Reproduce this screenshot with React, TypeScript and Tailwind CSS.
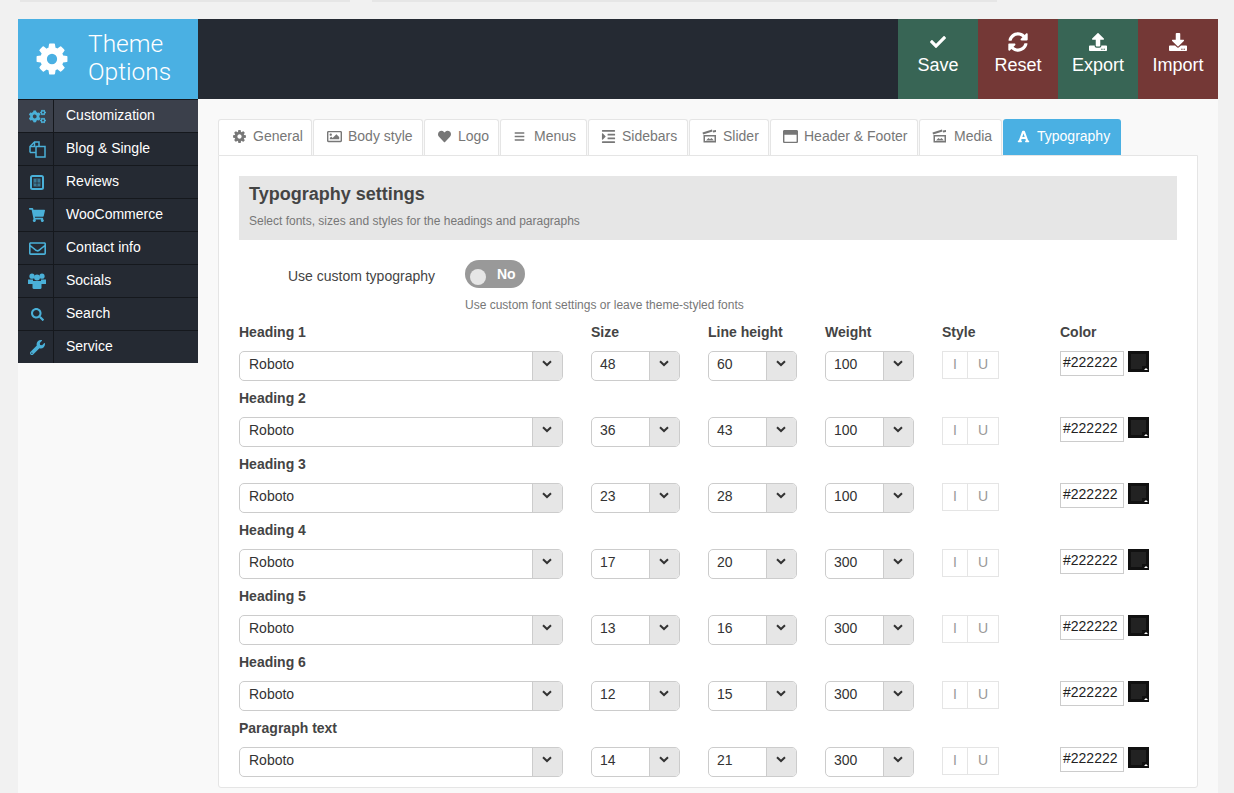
import React from "react";
import {
  FaBars,
  FaCheck,
  FaCogs,
  FaDownload,
  FaFont,
  FaHeart,
  FaIndent,
  FaRegEnvelope,
  FaRegImage,
  FaRegWindowMaximize,
  FaSearch,
  FaShoppingCart,
  FaSyncAlt,
  FaUpload,
  FaWrench,
} from "react-icons/fa";

function CogIcon({ size }: { size: number }) {
  return (
    <svg width={size} height={size} viewBox="0 0 1792 1792" fill="currentColor">
      <path d="M1152 896q0-106-75-181t-181-75-181 75-75 181 75 181 181 75 181-75 75-181zm512-109v222q0 12-8 23t-20 13l-185 28q-19 54-39 91 35 50 107 138 10 12 10 25t-9 23q-27 37-99 108t-94 71q-12 0-26-9l-138-108q-44 23-91 38-16 136-29 186-7 28-36 28h-222q-14 0-24.5-8.5t-11.5-21.5l-28-184q-49-16-90-37l-141 107q-10 9-25 9-14 0-25-11-126-114-165-168-7-10-7-23 0-12 8-23 15-21 51-66.5t54-70.5q-27-50-41-99l-183-27q-13-2-21-12.5t-8-23.5v-222q0-12 8-23t19-13l186-28q14-46 39-92-40-57-107-138-10-12-10-24 0-10 9-23 26-36 98.5-107.5t94.5-71.5q13 0 26 10l138 107q44-23 91-38 16-136 29-186 7-28 36-28h222q14 0 24.5 8.5t11.5 21.5l28 184q49 16 90 37l142-107q9-9 24-9 13 0 25 10 129 119 165 170 7 8 7 22 0 12-8 23-15 21-51 66.5t-54 70.5q26 50 41 98l183 28q13 2 21 12.5t8 23.5z" />
    </svg>
  );
}

function BlogIcon() {
  return (
    <svg width="17" height="17" viewBox="0 0 17 17" fill="none" stroke="currentColor" strokeWidth="1.5">
      <path d="M1 11.5 V5.5 L5.5 1 H10 V5.5" />
      <path d="M1 11.5 H7" />
      <path d="M5.5 1 V5.5 H1" />
      <path d="M7 5.5 H16 V16 H7 Z" />
    </svg>
  );
}

function ReviewsIcon() {
  return (
    <svg width="14" height="15" viewBox="0 0 14 15">
      <rect x="1" y="1" width="12" height="13" rx="1.5" fill="none" stroke="currentColor" strokeWidth="2" />
      <rect x="3.5" y="3.5" width="7" height="8" fill="currentColor" opacity="0.6" />
      <path d="M7 4 V11 M4 8 H10" stroke="#252a33" strokeWidth="0.7" />
    </svg>
  );
}

function SocialsIcon() {
  return (
    <svg width="18" height="16" viewBox="0 0 18 16" fill="currentColor">
      <circle cx="4" cy="3.2" r="2.6" />
      <circle cx="14" cy="3.2" r="2.6" />
      <circle cx="9" cy="4.5" r="3" />
      <path d="M0 6.5 H5 V11 H0 Z M13 6.5 H18 V11 H13 Z" />
      <path d="M4.5 8 H13.5 V14.5 Q13.5 16 12 16 H6 Q4.5 16 4.5 14.5 Z" />
    </svg>
  );
}

function SliderIcon() {
  return (
    <svg width="15" height="14" viewBox="0 0 15 14">
      <path d="M0.5 3.5 L10 0.5 L10.6 2.4 L1.1 5.4 Z" fill="currentColor" />
      <path d="M11 1.5 L14 1 L14 3 L11 3.5 Z" fill="currentColor" />
      <path d="M1.5 6 H14 V13.5 H1.5 Z M3 7.5 V12 H12.5 V7.5 Z" fill="currentColor" fillRule="evenodd" />
      <path d="M4 11.5 L6.5 9 L8 10.3 L9.5 9 L12 11.5 Z" fill="currentColor" />
    </svg>
  );
}

const menu = [
  { label: "Customization", icon: <FaCogs size={17} />, active: true },
  { label: "Blog & Single", icon: <BlogIcon /> },
  { label: "Reviews", icon: <ReviewsIcon /> },
  { label: "WooCommerce", icon: <FaShoppingCart size={16} /> },
  { label: "Contact info", icon: <FaRegEnvelope size={17} /> },
  { label: "Socials", icon: <SocialsIcon /> },
  { label: "Search", icon: <FaSearch size={13} /> },
  { label: "Service", icon: <FaWrench size={15} /> },
];

const actions = [
  { label: "Save", icon: <FaCheck size={16} />, color: "bg-[#386555]" },
  { label: "Reset", icon: <FaSyncAlt size={20} />, color: "bg-[#743836]" },
  { label: "Export", icon: <FaUpload size={18} />, color: "bg-[#386555]" },
  { label: "Import", icon: <FaDownload size={18} />, color: "bg-[#743836]" },
];

const tabs = [
  { label: "General", icon: <CogIcon size={15} />, width: "w-[94px]", pad: "pl-[13px]", slot: "w-[21px]" },
  { label: "Body style", icon: <FaRegImage size={15} />, width: "w-[110px]", pad: "pl-[13px]", slot: "w-[21px]" },
  { label: "Logo", icon: <FaHeart size={13} />, width: "w-[75px]", pad: "pl-[13px]", slot: "w-[20px]" },
  { label: "Menus", icon: <FaBars size={11} />, width: "w-[87px]", pad: "pl-[13px]", slot: "w-[20px]" },
  { label: "Sidebars", icon: <FaIndent size={15} />, width: "w-[100px]", pad: "pl-[12px]", slot: "w-[21px]" },
  { label: "Slider", icon: <SliderIcon />, width: "w-[80px]", pad: "pl-[12px]", slot: "w-[21px]" },
  { label: "Header & Footer", icon: <FaRegWindowMaximize size={15} />, width: "w-[148px]", pad: "pl-[12px]", slot: "w-[21px]" },
  { label: "Media", icon: <SliderIcon />, width: "w-[83px]", pad: "pl-[12px]", slot: "w-[22px]" },
];

const rows = [
  { label: "Heading 1", size: "48", line: "60", weight: "100" },
  { label: "Heading 2", size: "36", line: "43", weight: "100" },
  { label: "Heading 3", size: "23", line: "28", weight: "100" },
  { label: "Heading 4", size: "17", line: "20", weight: "300" },
  { label: "Heading 5", size: "13", line: "16", weight: "300" },
  { label: "Heading 6", size: "12", line: "15", weight: "300" },
  { label: "Paragraph text", size: "14", line: "21", weight: "300" },
];

function Select({ value, wide }: { value: string; wide?: boolean }) {
  return (
    <div className={`flex h-[30px] items-stretch rounded-[5px] border border-[#ccc] bg-white text-[14px] text-[#333] ${wide ? "w-[324px]" : "w-[89px]"}`}>
      <span className={`flex-1 leading-[25px] ${wide ? "pl-[9px]" : "pl-[8px]"}`}>{value}</span>
      <span className="flex w-[30px] items-center justify-center rounded-r-[4px] border-l border-[#ccc] bg-[#e6e6e6] pb-[5px] pr-[1px]">
        <svg width="10" height="7" viewBox="0 0 10 7">
          <path d="M1 1.2 L5 5 L9 1.2" fill="none" stroke="#333" strokeWidth="2" />
        </svg>
      </span>
    </div>
  );
}

function Row({ label, size, line, weight, first }: { label: string; size: string; line: string; weight: string; first?: boolean }) {
  return (
    <div className="grid h-[66px] grid-cols-[352px_117px_117px_117px_118px_1fr] text-[14px]">
      <div>
        <div className="mb-[9px] h-[20px] font-bold leading-[20px] text-[#444]">{label}</div>
        <Select value="Roboto" wide />
      </div>
      {[
        { title: "Size", value: size },
        { title: "Line height", value: line },
        { title: "Weight", value: weight },
      ].map((col) => (
        <div key={col.title}>
          <div className="mb-[9px] h-[20px] font-bold leading-[20px] text-[#444]">{first ? col.title : ""}</div>
          <Select value={col.value} />
        </div>
      ))}
      <div>
        <div className="mb-[9px] h-[20px] font-bold leading-[20px] text-[#444]">{first ? "Style" : ""}</div>
        <div className="flex h-[28px] w-[57px] border border-[#e5e5e5] text-[14px] leading-[25px] text-[#999]">
          <span className="w-[25px] border-r border-[#e5e5e5] text-center">I</span>
          <span className="flex-1 text-center">U</span>
        </div>
      </div>
      <div>
        <div className="mb-[9px] h-[20px] font-bold leading-[20px] text-[#444]">{first ? "Color" : ""}</div>
        <div className="flex items-start gap-[4px]">
          <div className="h-[25px] w-[64px] border border-[#ccc] bg-white pl-[2px] text-[14px] leading-[20px] text-[#222]">#222222</div>
          <div className="relative h-[21px] w-[21px] bg-[#111] p-[3px]">
            <div className="h-full w-full bg-[#222]" />
            <span className="absolute bottom-0 right-0 flex h-[6px] w-[7px] items-center justify-center bg-[#111]">
              <span className="h-0 w-0 border-x-[2px] border-b-[2px] border-x-transparent border-b-white" />
            </span>
          </div>
        </div>
      </div>
    </div>
  );
}

export default function App() {
  return (
    <div className="h-[793px] overflow-hidden bg-[#f1f1f1] font-['Liberation_Sans',Arial,sans-serif]">
      {/* leftovers of the admin bar */}
      <div className="flex h-[2px] gap-[22px] pl-[20px]">
        <div className="w-[330px] bg-[#e6e6e6]" />
        <div className="w-[625px] bg-[#e6e6e6]" />
      </div>

      <div className="ml-[18px] mt-[17px] h-[774px] w-[1200px] bg-[#f9f9f9]">
        {/* Header */}
        <header className="flex h-[80px] bg-[#252a33]">
          <div className="flex w-[180px] items-center bg-[#4ab0e3] pl-[16px] text-white">
            <CogIcon size={36} />
            <div className="ml-[18px] pb-[2px] font-['Roboto',sans-serif] text-[24.5px] font-light leading-[28px]">
              Theme
              <br />
              Options
            </div>
          </div>
          <div className="flex-1" />
          {actions.map((a) => (
            <div key={a.label} className={`flex w-[80px] flex-col items-center pt-[13px] text-white ${a.color}`}>
              <div className="flex h-[20px] items-center">{a.icon}</div>
              <span className="mt-[1px] text-[18px] leading-[24px]">{a.label}</span>
            </div>
          ))}
        </header>

        <div className="flex items-start">
          {/* Sidebar */}
          <aside className="w-[180px] bg-[#252a33]">
            {menu.map((m) => (
              <div
                key={m.label}
                className={`flex h-[33px] border-t border-[#15181d] text-[14px] text-white ${m.active ? "bg-[#3b404b]" : ""}`}
              >
                <span className="flex w-[36px] items-center justify-center border-r border-[#15181d] pl-[3px] text-[#4ab0d8]">{m.icon}</span>
                <span className="pl-[12px] leading-[31px]">{m.label}</span>
              </div>
            ))}
          </aside>

          {/* Main */}
          <main className="ml-[20px] w-[980px] pt-[20px]">
            <div className="flex h-[36px] gap-[1px]">
              {tabs.map((t) => (
                <div
                  key={t.label}
                  className={`flex items-center rounded-t-[3px] border border-b-0 border-[#e5e5e5] bg-white pb-[1px] text-[14px] text-[#777] ${t.pad} ${t.width}`}
                >
                  <span className={`flex shrink-0 items-center pb-[2px] ${t.slot}`}>{t.icon}</span>
                  <span className="pb-[1px]">{t.label}</span>
                </div>
              ))}
              <div className="flex w-[118px] items-center rounded-t-[3px] bg-[#4ab0e3] pb-[1px] pl-[14px] text-[14px] text-white">
                <span className="flex w-[20px] shrink-0 items-center">
                  <FaFont size={13} />
                </span>
                <span className="pb-[1px]">Typography</span>
              </div>
            </div>

            <div className="h-[633px] rounded-b-[3px] border border-[#e5e5e5] bg-white px-[20px] pt-[20px]">
              <div className="h-[64px] bg-[#e6e6e6] pl-[10px] pt-[7px]">
                <h2 className="text-[18px] font-bold leading-[22px] text-[#444]">Typography settings</h2>
                <p className="mt-[8px] text-[12px] leading-[16px] text-[#777]">
                  Select fonts, sizes and styles for the headings and paragraphs
                </p>
              </div>

              <div className="mt-[20px] flex h-[28px] items-center">
                <span className="w-[196px] pt-[5px] text-right text-[14px] text-[#444]">Use custom typography</span>
                <div className="relative ml-[30px] h-[28px] w-[60px] rounded-full bg-[#999]">
                  <span className="absolute left-[5px] top-[9px] h-[16px] w-[16px] rounded-full bg-[#e6e6e6]" />
                  <span className="absolute left-[32px] top-[5px] text-[14px] font-bold leading-[18px] text-white">No</span>
                </div>
              </div>
              <p className="ml-[226px] mt-[9px] h-[16px] text-[12px] leading-[16px] text-[#777]">
                Use custom font settings or leave theme-styled fonts
              </p>

              <div className="mt-[9px]">
                {rows.map((r, i) => (
                  <Row key={r.label} {...r} first={i === 0} />
                ))}
              </div>
            </div>
          </main>
        </div>
      </div>
    </div>
  );
}
